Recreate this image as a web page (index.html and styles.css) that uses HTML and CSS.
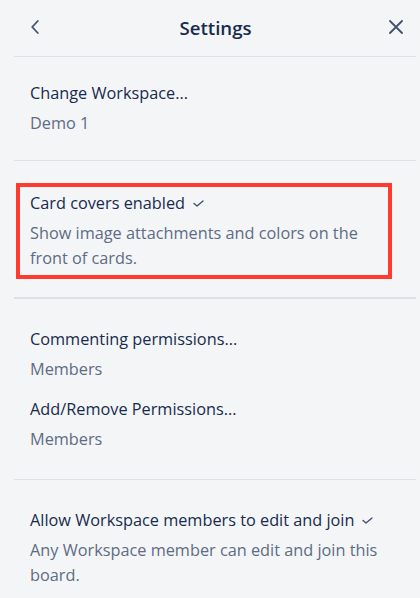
FILE: index.html
```html
<!DOCTYPE html>
<html lang="en">
<head>
<meta charset="utf-8">
<title>Settings</title>
<link rel="stylesheet" href="styles.css">
</head>
<body>
<div class="panel">
  <header class="header">
    <button class="icon-btn back" aria-label="Back">
      <svg width="8" height="14" viewBox="0 0 8 14"><path d="M6.8 1 L1.2 7 L6.8 13" fill="none" stroke="#42526e" stroke-width="1.8" stroke-linecap="round" stroke-linejoin="round"/></svg>
    </button>
    <h1 class="title">Settings</h1>
    <button class="icon-btn close" aria-label="Close">
      <svg width="14" height="14" viewBox="0 0 14 14"><path d="M1 1 L13 13 M13 1 L1 13" fill="none" stroke="#42526e" stroke-width="1.8" stroke-linecap="round"/></svg>
    </button>
  </header>

  <section class="section s1">
    <div class="item">
      <div class="item-title">Change Workspace...</div>
      <div class="item-sub">Demo 1</div>
    </div>
  </section>

  <section class="section s2 thick">
    <div class="item highlight">
      <div class="item-title">Card covers enabled <svg class="check" width="11" height="7" viewBox="0 0 11 7"><path d="M1 3.5 L4 6 L10 1" fill="none" stroke="#42526e" stroke-width="1.4" stroke-linecap="round" stroke-linejoin="round"/></svg></div>
      <div class="item-sub">Show image attachments and colors on the front of cards.</div>
    </div>
  </section>

  <section class="section s3">
    <div class="item">
      <div class="item-title">Commenting permissions...</div>
      <div class="item-sub">Members</div>
    </div>
    <div class="item">
      <div class="item-title">Add/Remove Permissions...</div>
      <div class="item-sub">Members</div>
    </div>
  </section>

  <section class="section s4 last">
    <div class="item">
      <div class="item-title">Allow Workspace members to edit and join <svg class="check" width="11" height="7" viewBox="0 0 11 7"><path d="M1 3.5 L4 6 L10 1" fill="none" stroke="#42526e" stroke-width="1.4" stroke-linecap="round" stroke-linejoin="round"/></svg></div>
      <div class="item-sub">Any Workspace member can edit and join this board.</div>
    </div>
  </section>
</div>
</body>
</html>
```

FILE: styles.css
```css
* { box-sizing: border-box; }
html, body {
  margin: 0;
  padding: 0;
  background: #f4f5f7;
}
body {
  font-family: "Open Sans", "Noto Sans", sans-serif;
  color: #172b4d;
  font-size: 16.3px;
}
.panel {
  margin: 0 4px 0 14px;
}
.header {
  height: 57px;
  display: flex;
  align-items: center;
  justify-content: space-between;
  border-bottom: 1px solid #dfe1e6;
  padding: 0 12px 2px 13px;
}
.title {
  margin: 0;
  font-size: 18.6px;
  font-weight: 600;
  color: #172b4d;
}
.icon-btn {
  background: none;
  border: 0;
  padding: 0;
  width: 16px;
  height: 16px;
  display: flex;
  align-items: center;
  justify-content: center;
}
.section {
  border-bottom: 1px solid #dfe1e6;
}
.section.thick { border-bottom-width: 2px; }
.section.last { border-bottom: 0; }
.s1 { padding: 24px 0 24px; }
.s2 { padding: 22px 24px 18px 2px; }
.s3 { padding: 28px 0 27px; display: flex; flex-direction: column; gap: 15px; }
.s4 { padding: 28px 0 0; }
.item {
  padding: 0 16px;
}
.item-title {
  line-height: 24px;
  display: flex;
  align-items: center;
  gap: 8px;
}
.item-sub {
  margin-top: 6px;
  line-height: 25px;
  color: #5e6c84;
}
.check { display: block; }
.highlight {
  border: 4px solid #ff3b30;
  padding: 4px 10px 4px 10px;
}
```
